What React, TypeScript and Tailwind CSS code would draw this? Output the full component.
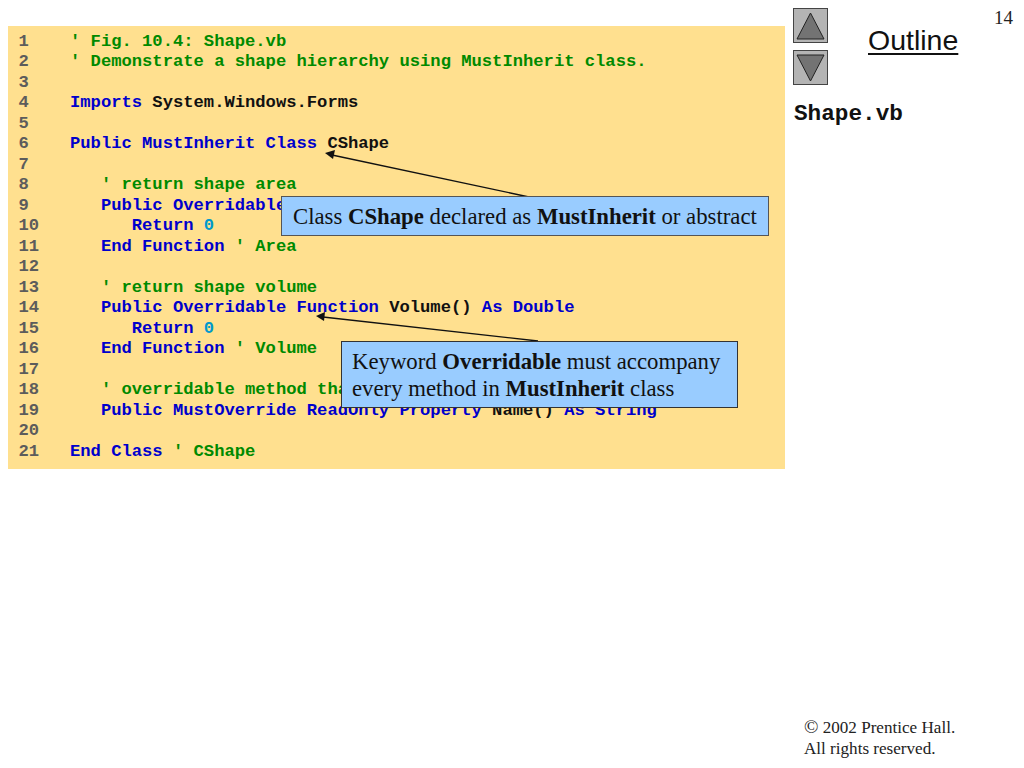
type Seg = [string, "k" | "c" | "t" | "n"];

const colors = {
  k: "text-[#0000cc]",
  c: "text-[#008a00]",
  t: "text-[#111111]",
  n: "text-[#0099cc]",
};

const lines: Seg[][] = [
  [["' Fig. 10.4: Shape.vb", "c"]],
  [["' Demonstrate a shape hierarchy using MustInherit class.", "c"]],
  [],
  [["Imports", "k"], [" System.Windows.Forms", "t"]],
  [],
  [["Public MustInherit Class", "k"], [" CShape", "t"]],
  [],
  [["   ' return shape area", "c"]],
  [["   Public Overridable Function", "k"], [" Area() ", "t"], ["As Double", "k"]],
  [["      Return ", "k"], ["0", "n"]],
  [["   End Function", "k"], [" ' Area", "c"]],
  [],
  [["   ' return shape volume", "c"]],
  [["   Public Overridable Function", "k"], [" Volume() ", "t"], ["As Double", "k"]],
  [["      Return ", "k"], ["0", "n"]],
  [["   End Function", "k"], [" ' Volume", "c"]],
  [],
  [["   ' overridable method that returns shape name", "c"]],
  [["   Public MustOverride ReadOnly Property", "k"], [" Name() ", "t"], ["As String", "k"]],
  [],
  [["End Class", "k"], [" ' CShape", "c"]],
];

function CodePanel() {
  return (
    <div className="mt-[26px] ml-2 h-[443px] w-[777px] shrink-0 bg-[#ffe08f] pt-[5px] pl-[10.5px] font-['Liberation_Mono',monospace] text-[17.17px] font-bold">
      {lines.map((segs, i) => (
        <div key={i} className="flex h-[20.5px] items-center whitespace-pre leading-none">
          <span className="w-[51.5px] shrink-0 text-[#5c5c5c]">{i + 1}</span>
          {segs.map((s, j) => (
            <span key={j} className={colors[s[1]]}>
              {s[0]}
            </span>
          ))}
        </div>
      ))}
    </div>
  );
}

function NavButton({ down }: { down?: boolean }) {
  return (
    <div className="flex h-[35px] w-[35px] items-center justify-center border border-[#444] bg-[#b4b4b4]">
      <svg width="29" height="29" viewBox="0 0 29 29">
        <polygon
          points={down ? "1,2 28,2 14.5,28" : "14.5,2 28,28 1,28"}
          fill="#737373"
          stroke="#222"
          strokeWidth="1"
        />
      </svg>
    </div>
  );
}

function Sidebar() {
  return (
    <div className="relative flex h-[768px] flex-1 flex-col pl-2">
      <div className="flex pt-2">
        <div className="flex flex-col gap-[7px]">
          <NavButton />
          <NavButton down />
        </div>
        <div className="ml-[40px] pt-[14px] font-['Liberation_Sans',sans-serif] text-[28.5px] leading-[36px] text-[#111] underline decoration-[2px] underline-offset-[3px]">
          Outline
        </div>
        <div className="ml-auto mr-[11px] font-['Liberation_Serif',serif] text-[19px] leading-[20px] text-[#222]">
          14
        </div>
      </div>
      <div className="mt-[16px] ml-px font-['Liberation_Mono',monospace] text-[22.7px] font-bold leading-[26px] text-[#111]">
        Shape.vb
      </div>
      <div className="mt-auto mb-[9px] ml-[11px] font-['Liberation_Serif',serif] text-[17.1px] leading-[21px] text-[#222]">
        <div>
          <span className="text-[19px] leading-none">©</span> 2002 Prentice Hall.
        </div>
        <div>All rights reserved.</div>
      </div>
    </div>
  );
}

export default function App() {
  return (
    <div className="relative flex h-[768px] w-[1024px] overflow-hidden bg-white">
      <CodePanel />
      <Sidebar />

      {/* callout arrows */}
      <svg className="absolute top-0 left-0" width="1024" height="768">
        <line x1="529" y1="197" x2="332" y2="155" stroke="#111" strokeWidth="1.3" />
        <polygon points="325,153 335,150 333,159" fill="#111" />
        <line x1="538" y1="341" x2="323" y2="317" stroke="#111" strokeWidth="1.3" />
        <polygon points="316,316 325,312 324,321" fill="#111" />
      </svg>

      {/* callouts */}
      <div className="absolute top-[196px] left-[281px] flex h-[40px] w-[488px] items-center border border-[#555] bg-[#99ccff] pt-[2px] pl-[11px] font-['Liberation_Serif',serif] text-[22.75px] whitespace-nowrap text-[#111]">
        <span>
          Class <b>CShape</b> declared as <b>MustInherit</b> or abstract
        </span>
      </div>
      <div className="absolute top-[341px] left-[341px] h-[67px] w-[397px] border border-[#333] bg-[#99ccff] pt-[6px] pl-[10px] font-['Liberation_Serif',serif] text-[22.75px] leading-[27px] whitespace-nowrap text-[#111]">
        <div>
          Keyword <b>Overridable</b> must accompany
        </div>
        <div>
          every method in <b>MustInherit</b> class
        </div>
      </div>
    </div>
  );
}
